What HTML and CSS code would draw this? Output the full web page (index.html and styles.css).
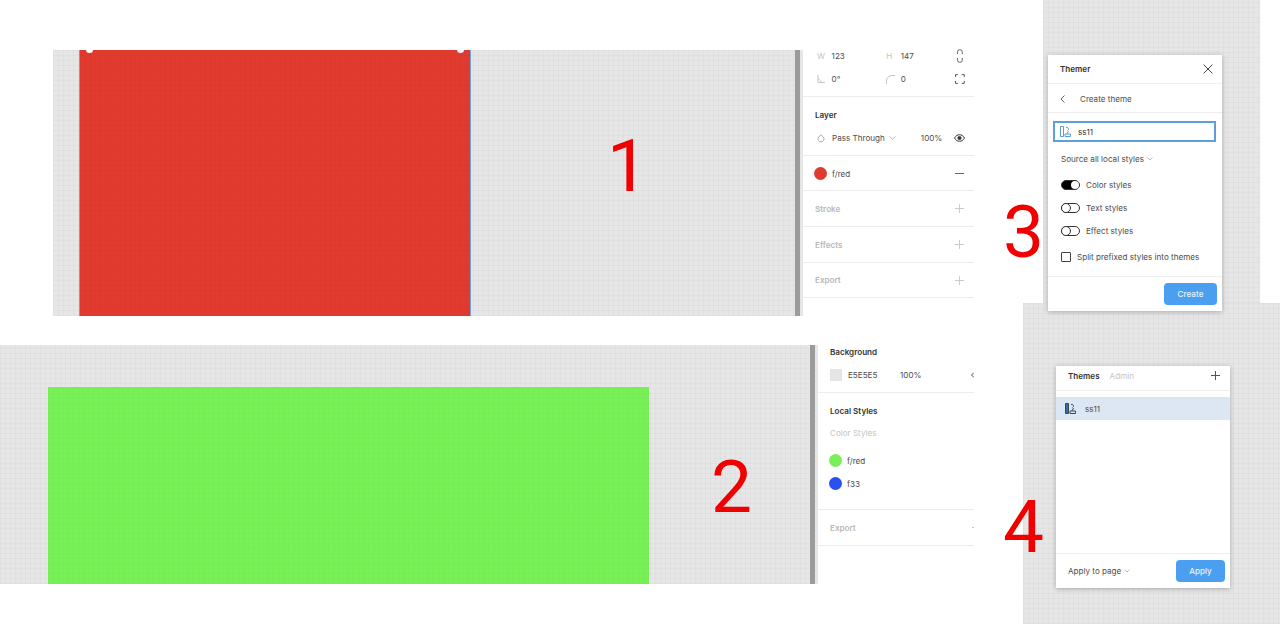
FILE: index.html
```html
<!DOCTYPE html>
<html lang="en">
<head>
<meta charset="UTF-8">
<meta name="viewport" content="width=device-width, initial-scale=1.0">
<title>Themer</title>
<link rel="stylesheet" href="styles.css">
</head>
<body>
<div class="canvas">

    <!-- shot 1 -->
    <div class="shot shot-one">
        <div class="stage grid">
            <div class="rect rect-red">
                <span class="handle handle-left"></span>
                <span class="handle handle-right"></span>
            </div>
        </div>
        <div class="bar"></div>
        <div class="panel panel-one">
            <div class="section size">
                <div class="size-row">
                    <span class="size-key">W</span><span class="size-val">123</span>
                    <span class="size-key">H</span><span class="size-val">147</span>
                    <svg class="icon" width="10" height="14" viewBox="0 0 10 14" fill="none" stroke="#666"><path d="M2.500 5V3a2.500 2.500 0 0 1 5 0v2M2.500 9v2a2.500 2.500 0 0 0 5 0V9"/></svg>
                </div>
                <div class="size-row">
                    <span class="size-key"><svg width="8" height="8" viewBox="0 0 8 8" fill="none" stroke="#c4c4c4"><path d="M1 0v7.500h7M1 3l4 4.500"/></svg></span><span class="size-val">0°</span>
                    <span class="size-key"><svg width="9" height="9" viewBox="0 0 9 9" fill="none" stroke="#c4c4c4"><path d="M.5 9V6a5.500 5.500 0 0 1 5.500-5.500h3"/></svg></span><span class="size-val">0</span>
                    <svg class="icon" width="10" height="10" viewBox="0 0 10 10" fill="none" stroke="#555"><path d="M.5 3V.5H3M7 .5h2.500V3M9.500 7v2.500H7M3 9.500H.5V7"/></svg>
                </div>
            </div>
            <div class="section layer">
                <h4>Layer</h4>
                <div class="row">
                    <svg class="drop" width="8" height="9" viewBox="0 0 8 9" fill="none" stroke="#aaa"><path d="M4 .7 7 4a3.100 3.100 0 1 1-6 0z"/></svg>
                    <span class="blend">Pass Through</span>
                    <svg class="caret" width="7" height="4" viewBox="0 0 7 4" fill="none" stroke="#bbb"><path d="m.5.500 3 2.500 3-2.500"/></svg>
                    <span class="pct">100%</span>
                    <svg class="icon" width="11" height="8" viewBox="0 0 11 8" fill="none" stroke="#333"><path d="M.5 4C2 1.500 3.700.7 5.500.7S9 1.500 10.500 4C9 6.500 7.300 7.300 5.500 7.300S2 6.500.5 4z"/><circle cx="5.500" cy="4" r="1.600" fill="#333"/></svg>
                </div>
            </div>
            <div class="section fill">
                <span class="dot dot-red"></span>
                <span class="style-name">f/red</span>
                <span class="minus"></span>
            </div>
            <div class="section empty"><span>Stroke</span><span class="plus"></span></div>
            <div class="section empty"><span>Effects</span><span class="plus"></span></div>
            <div class="section empty last"><span>Export</span><span class="plus"></span></div>
        </div>
    </div>

    <!-- shot 2 -->
    <div class="shot shot-two">
        <div class="stage grid">
            <div class="rect rect-green"></div>
        </div>
        <div class="bar"></div>
        <div class="panel panel-two">
            <div class="section background">
                <h4>Background</h4>
                <div class="row">
                    <span class="swatch"></span>
                    <span class="hex">E5E5E5</span>
                    <span class="opacity">100%</span>
                    <svg class="cut" width="3" height="6" viewBox="0 0 3 6" fill="none" stroke="#555"><path d="M3 .5.5 3 3 5.500"/></svg>
                </div>
            </div>
            <div class="section local">
                <h4>Local Styles</h4>
                <div class="faint">Color Styles</div>
                <div class="row style-row"><span class="dot dot-green"></span><span>f/red</span></div>
                <div class="row style-row"><span class="dot dot-blue"></span><span>f33</span></div>
            </div>
            <div class="section empty"><span>Export</span><span class="stub"></span></div>
        </div>
    </div>

    <div class="backdrop backdrop-three grid"></div>
    <div class="backdrop backdrop-four grid"></div>

    <span class="num num-1">1</span>
    <span class="num num-2">2</span>
    <span class="num num-3">3</span>
    <span class="num num-4">4</span>

    <!-- shot 3: create theme -->
    <div class="plugin plugin-create">
        <div class="plugin-head">
            <strong>Themer</strong>
            <svg class="close" width="10" height="10" viewBox="0 0 10 10" fill="none" stroke="#444"><path d="m.7.700 8.600 8.600M9.300.700.7 9.300"/></svg>
        </div>
        <div class="plugin-back">
            <svg width="5" height="8" viewBox="0 0 5 8" fill="none" stroke="#666"><path d="M4.500.500 1 4l3.500 3.500"/></svg>
            <span>Create theme</span>
        </div>
        <div class="plugin-body">
            <div class="name-input">
                <svg width="11" height="11" viewBox="0 0 11 11" fill="none" stroke="#5a9bd8"><path d="M.5.500h3v10h-3zM6 1.500a1.500 1.500 0 1 1 1.500 3M5 10.500V8h5.500v2.500zM7 8l1.500-3"/></svg>
                <span>ss11</span>
            </div>
            <div class="source">Source all local styles
                <svg width="6" height="4" viewBox="0 0 6 4" fill="none" stroke="#bbb"><path d="m.5.500 2.500 2.500 2.500-2.500"/></svg>
            </div>
            <div class="toggle-row"><span class="toggle on"></span>Color styles</div>
            <div class="toggle-row"><span class="toggle"></span>Text styles</div>
            <div class="toggle-row"><span class="toggle"></span>Effect styles</div>
            <div class="check-row"><span class="check"></span>Split prefixed styles into themes</div>
        </div>
        <div class="plugin-foot">
            <span class="btn btn-create">Create</span>
        </div>
    </div>

    <!-- shot 4: theme list -->
    <div class="plugin plugin-list">
        <div class="plugin-tabs">
            <strong>Themes</strong>
            <span class="tab-off">Admin</span>
            <svg class="add" width="9" height="9" viewBox="0 0 9 9" fill="none" stroke="#555"><path d="M4.500 0v9M0 4.500h9"/></svg>
        </div>
        <div class="theme-list">
            <div class="theme-item">
                <svg width="11" height="11" viewBox="0 0 11 11" fill="none" stroke="#3a4a5a"><path fill="#2f6fb0" d="M.5.500h3v10h-3z"/><path d="M6 1.500a1.500 1.500 0 1 1 1.500 3M5 10.500V8h5.500v2.500zM7 8l1.500-3"/></svg>
                <span>ss11</span>
            </div>
        </div>
        <div class="plugin-foot list-foot">
            <span class="apply-to">Apply to page
                <svg width="6" height="4" viewBox="0 0 6 4" fill="none" stroke="#bbb"><path d="m.5.500 2.500 2.500 2.500-2.500"/></svg>
            </span>
            <span class="btn btn-apply">Apply</span>
        </div>
    </div>

</div>
</body>
</html>
```

FILE: styles.css
```css
body {
    margin: 0;
    background: #fff;
    font-family: Inter, "Liberation Sans", sans-serif;
    font-size: 8.1px;
    color: #4d4d4d;
}

.canvas {
    position: relative;
    width: 1280px;
    height: 624px;
    overflow: hidden;
}

/* pasted screenshots sit free on the canvas */
.shot {
    position: absolute;
    display: flex;
}
.shot-one {
    left: 53px;
    top: 50px;
    width: 921px;
    height: 266px;
}
.shot-two {
    left: 0;
    top: 345px;
    width: 974px;
    height: 239px;
}

.grid {
    background-color: #e6e6e6;
    background-image:
        repeating-linear-gradient(90deg, rgba(0,0,0,.025) 0 1px, transparent 1px 5px),
        repeating-linear-gradient(0deg, rgba(0,0,0,.025) 0 1px, transparent 1px 5px);
}

.stage {
    flex: 1;
    display: flex;
    align-items: flex-end;
}
.bar {
    width: 5px;
    background: #9b9b9b;
    border-right: 3px solid #e6e6e6;
}

.rect {
    position: relative;
    background-image:
        repeating-linear-gradient(90deg, rgba(0,0,0,.015) 0 1px, transparent 1px 5px),
        repeating-linear-gradient(0deg, rgba(0,0,0,.015) 0 1px, transparent 1px 5px);
}
.rect-red {
    margin-left: 26px;
    width: 390px;
    height: 100%;
    background-color: #e13a2e;
    border-left: 1px solid #6fa3d6;
    border-right: 1px solid #6fa3d6;
}
.rect-green {
    margin-left: 48px;
    width: 601px;
    height: 197px;
    background-color: #78f157;
}

.handle {
    position: absolute;
    top: -4px;
    width: 7px;
    height: 7px;
    border-radius: 50%;
    background: #fff;
}
.handle-left { left: 6px; }
.handle-right { right: 6px; }

.panel {
    background: #fff;
    flex: none;
}
.panel-one { width: 171px; height: 248px; }
.panel-two { width: 156px; }

.section {
    border-bottom: 1px solid #ececec;
    box-sizing: border-box;
    padding-left: 12px;
}
.section h4 {
    margin: 0;
    font-size: 8.1px;
    line-height: 10px;
    font-weight: 600;
    color: #333;
}
.row {
    display: flex;
    align-items: center;
}

.size {
    height: 47px;
    padding-left: 14px;
}
.size-row {
    display: flex;
    align-items: center;
    height: 12px;
}
.size-row + .size-row { margin-top: 11px; }
.size-key {
    width: 15px;
    color: #c4c4c4;
    display: flex;
}
.size-val { width: 56px; }
.icon {
    margin-left: auto;
    margin-right: 9px;
}

.layer {
    height: 59px;
    padding-top: 13px;
}
.layer .row { margin-top: 12px; height: 12px; }
.drop { margin-left: 2px; margin-right: 7px; }
.blend { margin-right: 4px; white-space: nowrap; }
.pct { margin-left: 25px; }

.fill {
    height: 35px;
    padding-top: 1px;
    display: flex;
    align-items: center;
}
.dot {
    width: 13px;
    height: 13px;
    border-radius: 50%;
    flex: none;
    margin-right: 5px;
}
.fill .dot { margin-left: -1px; }
.dot-red { background: #e13a2e; }
.dot-green { background: #78f157; }
.dot-blue { background: #2b4ff0; }
.minus {
    margin-left: auto;
    margin-right: 10px;
    width: 9px;
    height: 1px;
    background: #666;
}

.empty {
    height: 36px;
    display: flex;
    align-items: center;
    justify-content: space-between;
    font-weight: 600;
    color: #b8b8b8;
}
.last { height: 35px; }
.plus {
    position: relative;
    width: 9px;
    height: 9px;
    margin-right: 10px;
    background:
        linear-gradient(#cacaca, #cacaca) center / 9px 1px no-repeat,
        linear-gradient(#cacaca, #cacaca) center / 1px 9px no-repeat;
}

.panel-two .section { padding-left: 12px; }
.background {
    height: 48px;
    padding-top: 2px;
}
.background .row { margin-top: 12px; height: 12px; }
.swatch {
    width: 12px;
    height: 12px;
    background: #e5e5e5;
    margin-right: 6px;
}
.hex { width: 52px; }
.cut { margin-left: auto; }
.stub {
    width: 2px;
    height: 1px;
    background: #c4c4c4;
}

.local {
    height: 117px;
    padding-top: 13px;
}
.faint {
    margin-top: 12px;
    line-height: 10px;
    color: #c4c4c4;
}
.style-row { height: 13px; }
.faint + .style-row { margin-top: 16px; }
.style-row + .style-row { margin-top: 10px; }
.local .dot { margin-left: -1px; }

.backdrop {
    position: absolute;
}
.backdrop-three {
    left: 1043px;
    top: 0;
    width: 217px;
    height: 303px;
}
.backdrop-four {
    left: 1023px;
    top: 303px;
    width: 257px;
    height: 321px;
}

.num {
    position: absolute;
    font-family: Roboto, "Liberation Sans", sans-serif;
    font-size: 73px;
    line-height: 73px;
    color: #f00000;
}
.num-1 { left: 607px; top: 130px; }
.num-2 { left: 711px; top: 451px; }
.num-3 { left: 1003px; top: 196px; }
.num-4 { left: 1003px; top: 491px; }

/* plugin windows */
.plugin {
    position: absolute;
    width: 174px;
    background: #fff;
    box-shadow: 0 1px 5px rgba(0,0,0,.25);
    display: flex;
    flex-direction: column;
}
.plugin-create {
    left: 1048px;
    top: 55px;
    height: 256px;
}
.plugin-list {
    left: 1056px;
    top: 366px;
    height: 222px;
}
.plugin strong {
    font-weight: 600;
    color: #333;
}

.plugin-head {
    height: 29px;
    flex: none;
    display: flex;
    align-items: center;
    justify-content: space-between;
    padding: 0 9px 0 12px;
    border-bottom: 1px solid #eee;
    box-sizing: border-box;
}
.plugin-back {
    height: 29px;
    flex: none;
    display: flex;
    align-items: center;
    gap: 15px;
    padding: 1px 0 0 12px;
    border-bottom: 1px solid #eee;
    box-sizing: border-box;
}
.plugin-body {
    flex: 1;
    padding: 8px 6px 0 5px;
}
.name-input {
    height: 21px;
    border: 2px solid #5c9fdc;
    box-sizing: border-box;
    display: flex;
    align-items: center;
    gap: 7px;
    padding-left: 5px;
    color: #333;
}
.source {
    margin: 11px 0 0 8px;
    height: 12px;
    display: flex;
    align-items: center;
    gap: 3px;
}
.toggle-row {
    display: flex;
    align-items: center;
    gap: 6px;
    height: 12px;
    margin: 11px 0 0 8px;
}
.source + .toggle-row { margin-top: 14px; }
.toggle {
    position: relative;
    width: 17px;
    height: 8px;
    border: 1px solid #333;
    border-radius: 6px;
}
.toggle::after {
    content: "";
    position: absolute;
    left: -1px;
    top: -1px;
    width: 8px;
    height: 8px;
    border: 1px solid #333;
    border-radius: 50%;
    background: #fff;
}
.toggle.on { background: #000; }
.toggle.on::after {
    left: auto;
    right: 0;
    top: 0;
    border: none;
}
.check-row {
    display: flex;
    align-items: center;
    gap: 6px;
    height: 12px;
    margin: 14px 0 0 8px;
}
.check {
    width: 8px;
    height: 8px;
    border: 1px solid #444;
    border-radius: 1px;
}
.plugin-foot {
    height: 35px;
    flex: none;
    border-top: 1px solid #eee;
    box-sizing: border-box;
    display: flex;
    align-items: center;
    justify-content: flex-end;
    padding-right: 5px;
}
.btn {
    height: 22px;
    border-radius: 4px;
    background: #4b9ff0;
    color: #e8f3fd;
    font-weight: 500;
    display: flex;
    align-items: center;
    justify-content: center;
}
.btn-create { width: 53px; }
.btn-apply { width: 49px; }

.plugin-tabs {
    height: 25px;
    flex: none;
    display: flex;
    align-items: center;
    gap: 10px;
    padding: 0 10px 5px 12px;
    box-sizing: border-box;
    border-bottom: 1px solid #eee;
}
.tab-off { color: #c4c4c4; }
.add { margin-left: auto; }
.theme-list {
    flex: 1;
    padding-top: 6px;
}
.theme-item {
    height: 23px;
    background: #dce7f3;
    display: flex;
    align-items: center;
    gap: 9px;
    padding-left: 9px;
}
.list-foot {
    justify-content: space-between;
    padding-left: 12px;
}
.apply-to {
    display: flex;
    align-items: center;
    gap: 3px;
}
```
